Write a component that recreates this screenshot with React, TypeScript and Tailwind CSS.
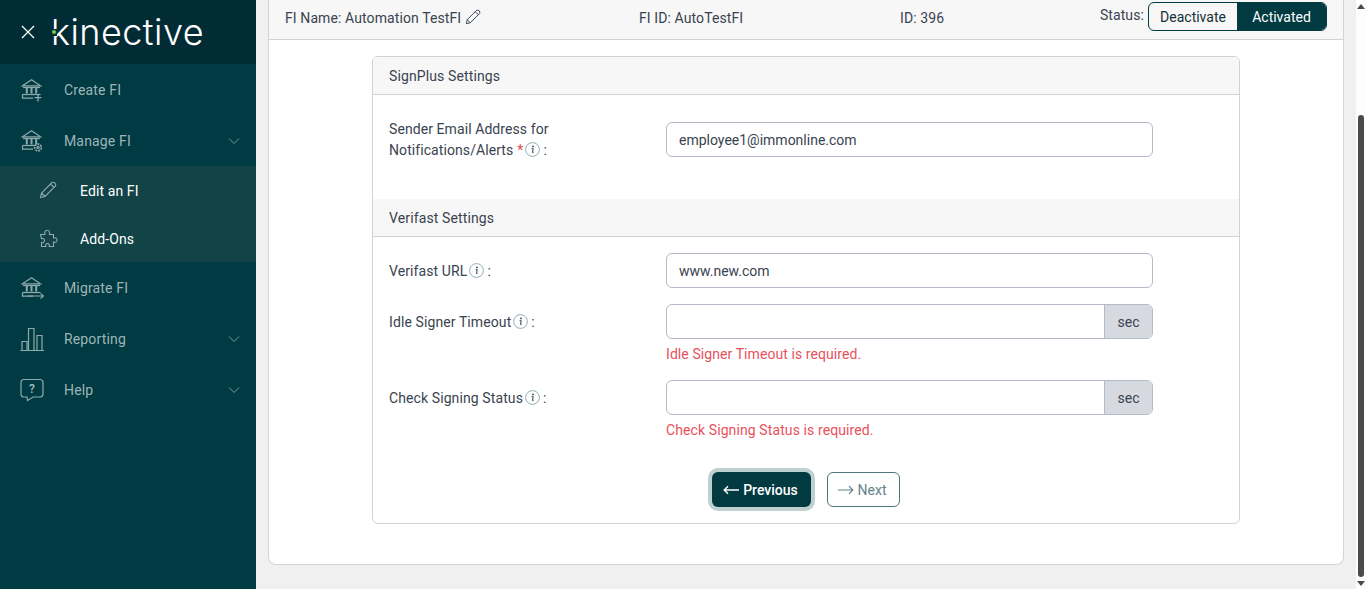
import React from "react";

const Bank = ({ children }: { children?: React.ReactNode }) => (
  <svg width="26" height="26" viewBox="0 0 26 26" fill="none" stroke="#8fa9ac" strokeWidth="1.25" className="shrink-0">
    <path d="M2.5 8.8 L11.5 2.8 L20.5 8.8 Z" />
    <path d="M3 10.5 H20" />
    <path d="M6.8 11 V16.5 M11.5 11 V16.5 M16.2 11 V16.5" strokeWidth="2" />
    <path d="M2.5 17.5 H20.5" />
    <path d="M2.5 17.5 V21 H13" />
    {children}
  </svg>
);

const Chevron = () => (
  <svg width="12" height="8" viewBox="0 0 12 8" fill="none" stroke="#7d9a9e" strokeWidth="1" className="shrink-0">
    <path d="M1 1.5 L6 6.5 L11 1.5" />
  </svg>
);

const Row = ({ icon, label, chevron }: { icon: React.ReactNode; label: string; chevron?: boolean }) => (
  <div className="h-[51px] flex items-center pl-[20px] pr-[16px]">
    <div className="w-[44px] flex items-center">{icon}</div>
    <span className="flex-1 text-[14px] pt-[2px] tracking-[0.15px] text-[#9db5b8]">{label}</span>
    {chevron && <Chevron />}
  </div>
);

const Sub = ({ icon, label }: { icon: React.ReactNode; label: string }) => (
  <div className="h-[48px] flex items-center pl-[39px]">
    <div className="w-[41px] flex items-center">{icon}</div>
    <span className="text-[14px] pt-[2px] tracking-[0.1px] text-white">{label}</span>
  </div>
);

const Info = () => (
  <svg width="15" height="15" viewBox="0 0 15 15" className="inline-block shrink-0 ml-[2px] mr-[2px] -mt-[2px]">
    <circle cx="7.5" cy="7.5" r="6.9" fill="none" stroke="#86a3a9" strokeWidth="0.9" />
    <circle cx="8" cy="4.4" r="0.9" fill="#2f3f4a" />
    <path d="M6.6 6.7 H8.2 L7.5 10.4 H8.6" fill="none" stroke="#2f3f4a" strokeWidth="1" />
  </svg>
);

const Field = ({ value }: { value: string }) => (
  <div className="w-[487px] h-[35px] border border-[#b4bac8] rounded-[6px] flex items-center px-[12px] pt-[2px] text-[14px] text-[#3a4350] bg-white">
    {value}
  </div>
);

const SecField = () => (
  <div className="w-[487px] h-[35px] border border-[#b4bac8] rounded-[6px] flex bg-white overflow-hidden">
    <div className="flex-1" />
    <div className="w-[48px] bg-[#d6d9df] border-l border-[#b4bac8] flex items-center justify-center pt-[2px] text-[14px] text-[#3a4350]">sec</div>
  </div>
);

const SectionHead = ({ title }: { title: string }) => (
  <div className="h-[38px] bg-[#f7f7f7] border-b border-[#cfd2d6] flex items-center px-[16px] pt-[2px] text-[14px] tracking-[0.12px] text-[#3a4350]">{title}</div>
);

const Label = ({ text }: { text: string }) => (
  <div className="w-[277px] text-[14px] tracking-[0.1px] text-[#3a4350] flex items-center h-[35px] pt-[2px]">
    <span>{text}</span>
    <Info />
    <span className="ml-[1px]">:</span>
  </div>
);

export default function App() {
  return (
    <div className="flex h-[589px] w-[1366px] overflow-hidden bg-[#f0f0f0] font-['Roboto',sans-serif]">
      <aside className="w-[256px] shrink-0 bg-[#003a42] flex flex-col">
        <div className="h-[64px] bg-[#022c35] flex items-center pl-[21px]">
          <svg width="14" height="14" viewBox="0 0 14 14" stroke="#ffffff" strokeWidth="1.3" fill="none">
            <path d="M1 1 L13 13 M13 1 L1 13" />
          </svg>
          <div className="relative ml-[16px] text-[36px] leading-none font-[350] text-white tracking-[0.45px] font-['Inter',sans-serif] -mt-[1px]">
            <span>kinective</span>
            <span className="absolute left-0 top-[15px] w-[6px] h-[7px] bg-[#022c35] flex items-center justify-center">
              <span className="w-[4px] h-[4px] rounded-full bg-[#6ad04b]" />
            </span>
          </div>
        </div>
        <Row label="Create FI" icon={<Bank><path d="M18 17 V24.5 M14.5 20.7 H21.5" strokeWidth="1.3" stroke="#8fa9ac" /></Bank>} />
        <Row label="Manage FI" chevron icon={<Bank><circle cx="18" cy="19.5" r="3.4" fill="#003a42" strokeWidth="1.7" strokeDasharray="2 1" /><circle cx="18" cy="19.5" r="1.1" /></Bank>} />
        <div className="bg-[#114347]">
          <Sub label="Edit an FI" icon={
            <svg width="18" height="18" viewBox="0 0 18 18" fill="none" stroke="#8fa9ac" strokeWidth="1.1">
              <path d="M1.5 16.5 L2.5 12 L13 1.5 Q14.5 0.8 16 2 Q17.2 3.5 16.5 5 L6 15.5 Z M11.5 3 L15 6.5 M2.5 12 L6 15.5" />
            </svg>} />
          <Sub label="Add-Ons" icon={
            <svg width="19" height="19" viewBox="0 0 19 19" fill="none" stroke="#8fa9ac" strokeWidth="1.1">
              <path d="M1.5 5.5 H6 C5.2 3.5 6 1.2 8.2 1.2 C10.4 1.2 11 3.5 10.4 5.5 H14.5 V9 C16.4 8.2 18 9.2 18 11 C18 12.8 16.4 13.7 14.5 13 V17.5 H10.2 C10.8 15.8 10 14.5 8.5 14.5 C7 14.5 6.2 15.8 6.8 17.5 H2.5 V13.5 C3.8 14 5.5 13.2 5.5 11.5 C5.5 9.8 3.8 9.2 2.5 9.6 Z" />
            </svg>} />
        </div>
        <Row label="Migrate FI" icon={<Bank><path d="M8 21 H23.5 M20.5 18.3 L23.5 21 L20.5 23.7" strokeWidth="1.1" /></Bank>} />
        <Row label="Reporting" chevron icon={
          <svg width="24" height="24" viewBox="0 0 24 24" fill="none" stroke="#8fa9ac" strokeWidth="1.2">
            <path d="M0.5 23.5 H24 M2 23 V14.5 H7 V23 M8.5 23 V1.5 H14 V23 M17 23 V8.5 H22 V23" />
          </svg>} />
        <Row label="Help" chevron icon={
          <svg width="24" height="24" viewBox="0 0 24 24" fill="none" stroke="#8fa9ac" strokeWidth="1.2">
            <path d="M4 1.5 H20 Q23 1.5 23 4.5 V16 Q23 19 20 19 H13 L7.5 22.5 L7 19 H4 Q1 19 1 16 V4.5 Q1 1.5 4 1.5 Z" />
            <text x="12" y="15" textAnchor="middle" fontSize="12" fill="#a8bcbf" stroke="none" fontFamily="Roboto" fontWeight="500">?</text>
          </svg>} />
      </aside>

      <main className="w-[1100px] shrink-0 pl-[12px] pr-[12px]">
        <div className="h-[565px] bg-white border border-[#d2d4d7] border-t-0 rounded-b-[8px] flex flex-col">
          <div className="h-[40px] bg-[#f7f7f7] border-b border-[#cfd2d6] flex items-center pl-[16px] pr-[16px] text-[14px] tracking-[0.1px] text-[#3a4350]">
            <div className="w-[354px] flex items-center -mt-[2px]">
              <span>FI Name: Automation TestFI</span>
              <svg width="16" height="16" viewBox="0 0 18 18" fill="none" stroke="#3a4350" strokeWidth="1.1" className="ml-[4px] -mt-[3px]">
                <path d="M1.5 16.5 L2.5 12 L13 1.5 Q14.5 0.8 16 2 Q17.2 3.5 16.5 5 L6 15.5 Z M11.5 3 L15 6.5 M2.5 12 L6 15.5" />
              </svg>
            </div>
            <span className="w-[261px] -mt-[2px]">FI ID: AutoTestFI</span>
            <span className="flex-1 -mt-[2px]">ID: 396</span>
            <span className="mr-[4px] -mt-[8px]">Status:</span>
            <div className="flex h-[29px] border border-[#023a42] rounded-[6px] overflow-hidden -mt-[6px] tracking-normal">
              <div className="w-[88px] flex items-center justify-center pt-[1px] text-[#15303a]">Deactivate</div>
              <div className="w-[89px] bg-[#023a42] text-white flex items-center justify-center pt-[1px]">Activated</div>
            </div>
          </div>

          <div className="ml-[103px] mt-[16px] w-[868px] h-[468px] border border-[#cfd2d6] rounded-[6px] overflow-hidden flex flex-col">
            <SectionHead title="SignPlus Settings" />
            <div className="h-[104px] pt-[27px] pl-[16px] flex items-start">
              <div className="w-[277px] text-[14px] tracking-[0.08px] leading-[21px] text-[#3a4350] -mt-[3px]">
                <div>Sender Email Address for</div>
                <div className="flex items-center">
                  Notifications/Alerts<span className="text-[#e5484d] ml-[4px]">*</span><Info /><span className="ml-[1px]">:</span>
                </div>
              </div>
              <Field value="employee1@immonline.com" />
            </div>
            <SectionHead title="Verifast Settings" />
            <div className="pl-[16px] pt-[16px] flex flex-col">
              <div className="flex"><Label text="Verifast URL" /><Field value="www.new.com" /></div>
              <div className="flex mt-[16px]">
                <Label text="Idle Signer Timeout" />
                <div>
                  <SecField />
                  <div className="text-[14px] tracking-[0.08px] text-[#e9505c] mt-[5px] leading-[21px]">Idle Signer Timeout is required.</div>
                </div>
              </div>
              <div className="flex mt-[15px]">
                <Label text="Check Signing Status" />
                <div>
                  <SecField />
                  <div className="text-[14px] tracking-[0.1px] text-[#e9505c] mt-[5px] leading-[21px]">Check Signing Status is required.</div>
                </div>
              </div>
            </div>
            <div className="flex justify-center mt-[31px] gap-[16px] text-[14px] pr-[1px]">
              <div className="h-[35px] w-[99px] rounded-[6px] bg-[#023a42] text-white font-medium flex items-center justify-center gap-[4px] pt-[1px] pr-[1px] ring-[4px] ring-[#bfd0d1]">
                <svg width="16" height="10" viewBox="0 0 16 10" fill="none" stroke="#fff" strokeWidth="1.4" className="-mt-[1px]"><path d="M16 5 H1.5 M5 1.2 L1.2 5 L5 8.8" /></svg>
                Previous
              </div>
              <div className="h-[35px] w-[73px] rounded-[6px] border border-[#4f767b] text-[#64828a] flex items-center justify-center gap-[4px] pt-[1px] pr-[2px]">
                <svg width="16" height="10" viewBox="0 0 16 10" fill="none" stroke="#64828a" strokeWidth="1.2" className="-mt-[1px]"><path d="M0 5 H14.5 M11 1.2 L14.8 5 L11 8.8" /></svg>
                Next
              </div>
            </div>
          </div>
        </div>
      </main>

      <div className="w-[10px] shrink-0 bg-[#fdfdfd] flex flex-col items-center">
        <svg width="8" height="5" viewBox="0 0 8 5" className="mt-[4px]"><path d="M4 0 L8 5 H0 Z" fill="#4a4a4a" /></svg>
        <div className="mt-[106px] h-[462px] w-[6px] rounded-full bg-[#4a4a4a]" />
        <svg width="8" height="5" viewBox="0 0 8 5" className="mt-[4px]"><path d="M4 5 L8 0 H0 Z" fill="#4a4a4a" /></svg>
      </div>
    </div>
  );
}
